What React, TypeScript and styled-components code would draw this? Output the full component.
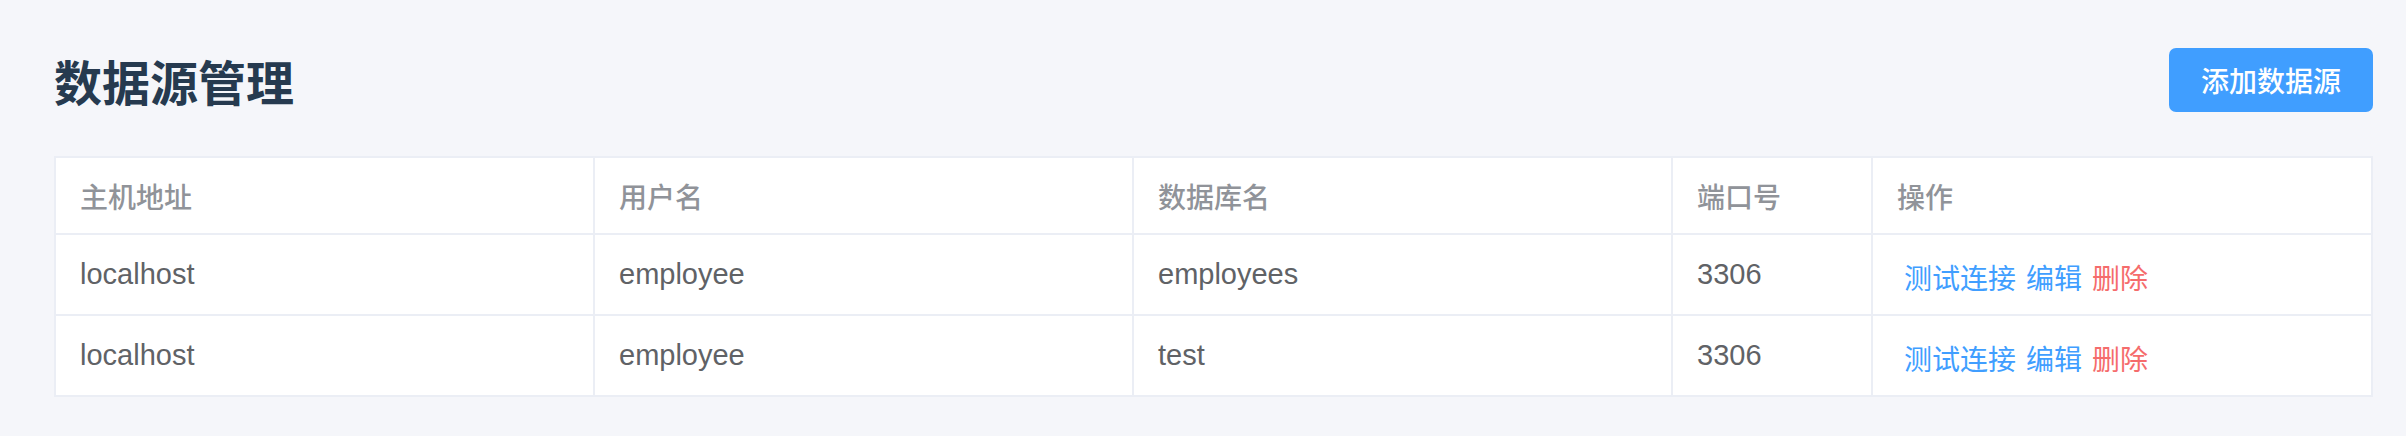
import React from "react";
import styled, { createGlobalStyle } from "styled-components";

const GlobalStyle = createGlobalStyle`
  html, body {
    margin: 0;
    padding: 0;
    background: #f5f6fa;
  }
  body {
    font-family: "Liberation Sans", "Noto Sans CJK SC", sans-serif;
  }
`;

const Page = styled.div`
  box-sizing: border-box;
  width: 2406px;
  min-height: 436px;
  padding: 48px 33px 0 54px;
  background: #f5f6fa;
`;

const HeaderBar = styled.div`
  display: flex;
  align-items: center;
  justify-content: space-between;
  height: 64px;
  margin-bottom: 44px;
`;

const Title = styled.h1`
  margin: 0;
  font-family: "Noto Sans CJK SC", sans-serif;
  font-size: 48px;
  font-weight: 700;
  line-height: 64px;
  color: #263a4f;
`;

const PrimaryButton = styled.button`
  box-sizing: border-box;
  width: 204px;
  height: 64px;
  padding: 0;
  border: none;
  border-radius: 7px;
  background: #409eff;
  color: #ffffff;
  font-family: "Noto Sans CJK SC", sans-serif;
  font-size: 28px;
  font-weight: 500;
  line-height: 64px;
  cursor: pointer;
`;

const Table = styled.table`
  width: 100%;
  border-collapse: collapse;
  table-layout: fixed;
  background: #ffffff;
  border: 2px solid #ebeef5;
`;

const HeadCell = styled.th<{ $w?: number }>`
  width: ${(p) => (p.$w ? `${p.$w}px` : "auto")};
  height: 77px;
  padding: 0 24px;
  border: 2px solid #ebeef5;
  text-align: left;
  font-family: "Noto Sans CJK SC", sans-serif;
  font-size: 28px;
  font-weight: 500;
  color: #909399;
  box-sizing: border-box;
`;

const Cell = styled.td`
  height: 81px;
  padding: 0 24px;
  border: 2px solid #ebeef5;
  font-family: "Liberation Sans", "Noto Sans CJK SC", sans-serif;
  font-size: 29px;
  color: #606266;
  white-space: nowrap;
  box-sizing: border-box;
`;

const Actions = styled.div`
  display: flex;
  gap: 10px;
  padding: 5px 0 0 7px;
`;

const LinkButton = styled.span<{ $danger?: boolean }>`
  font-family: "Noto Sans CJK SC", sans-serif;
  font-size: 28px;
  color: ${(p) => (p.$danger ? "#f56c6c" : "#409eff")};
  cursor: pointer;
`;

const rows = [
  { host: "localhost", user: "employee", db: "employees", port: "3306" },
  { host: "localhost", user: "employee", db: "test", port: "3306" },
];

export default function App() {
  return (
    <>
      <GlobalStyle />
      <Page>
        <HeaderBar>
          <Title>数据源管理</Title>
          <PrimaryButton>添加数据源</PrimaryButton>
        </HeaderBar>
        <Table>
          <thead>
            <tr>
              <HeadCell>主机地址</HeadCell>
              <HeadCell>用户名</HeadCell>
              <HeadCell>数据库名</HeadCell>
              <HeadCell $w={200}>端口号</HeadCell>
              <HeadCell $w={500}>操作</HeadCell>
            </tr>
          </thead>
          <tbody>
            {rows.map((r, i) => (
              <tr key={i}>
                <Cell>{r.host}</Cell>
                <Cell>{r.user}</Cell>
                <Cell>{r.db}</Cell>
                <Cell>{r.port}</Cell>
                <Cell>
                  <Actions>
                    <LinkButton>测试连接</LinkButton>
                    <LinkButton>编辑</LinkButton>
                    <LinkButton $danger>删除</LinkButton>
                  </Actions>
                </Cell>
              </tr>
            ))}
          </tbody>
        </Table>
      </Page>
    </>
  );
}
